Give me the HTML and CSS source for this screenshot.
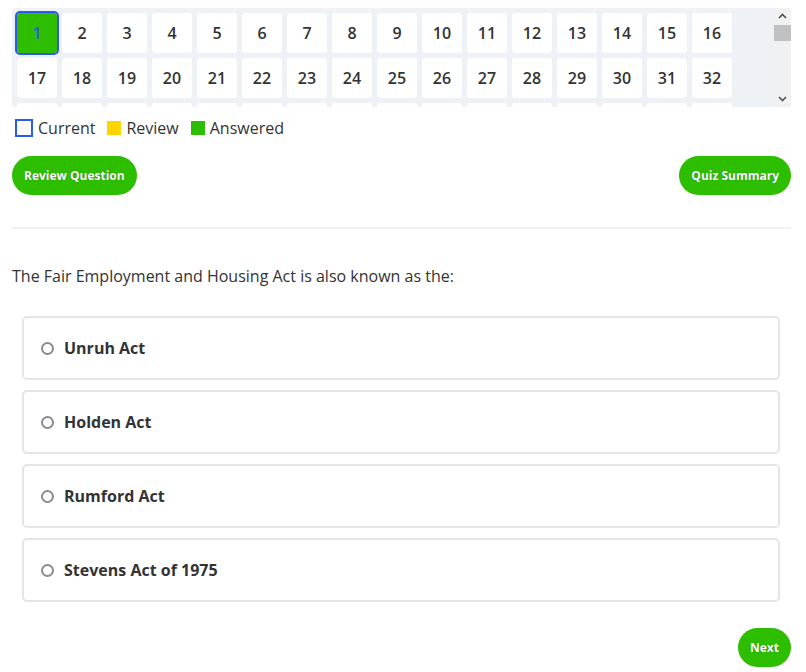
FILE: index.html
```html
<!DOCTYPE html>
<html lang="en">
<head>
<meta charset="utf-8">
<title>Quiz</title>
<link rel="stylesheet" href="styles.css">
</head>
<body>
<div class="page">
  <div class="nav-wrap">
    <div class="nav-grid" id="grid">
      <button class="qnum current answered">1</button>
    </div>
    <div class="scrollbar">
      <svg class="arrow" width="17" height="17" viewBox="0 0 17 17"><path d="M5 10 L8.5 6.5 L12 10" fill="none" stroke="#505050" stroke-width="1.6"/></svg>
      <div class="track"><div class="thumb"></div></div>
      <svg class="arrow" width="17" height="17" viewBox="0 0 17 17"><path d="M5 7 L8.5 10.5 L12 7" fill="none" stroke="#505050" stroke-width="1.6"/></svg>
    </div>
  </div>
  <div class="legend">
    <span class="legend-item"><span class="sw sw-current"></span>Current</span>
    <span class="legend-item"><span class="sw sw-review"></span>Review</span>
    <span class="legend-item"><span class="sw sw-answered"></span>Answered</span>
  </div>
  <div class="actions">
    <button class="pill">Review Question</button>
    <button class="pill">Quiz Summary</button>
  </div>
  <hr class="divider">
  <p class="question">The Fair Employment and Housing Act is also known as the:</p>
  <div class="options">
    <label class="option"><span class="radio"></span><span class="opt-text">Unruh Act</span></label>
    <label class="option"><span class="radio"></span><span class="opt-text">Holden Act</span></label>
    <label class="option"><span class="radio"></span><span class="opt-text">Rumford Act</span></label>
    <label class="option"><span class="radio"></span><span class="opt-text">Stevens Act of 1975</span></label>
  </div>
  <div class="footer">
    <button class="pill pill-next">Next</button>
  </div>
</div>
<script>
  var g = document.getElementById('grid');
  for (var i = 2; i <= 48; i++) {
    var b = document.createElement('button');
    b.className = 'qnum';
    b.textContent = i;
    g.appendChild(b);
  }
</script>
</body>
</html>
```

FILE: styles.css
```css
* { box-sizing: border-box; }
html, body { margin: 0; padding: 0; background: #fff; }
body {
  font-family: "Open Sans", "Noto Sans", sans-serif;
  color: #333;
}
.page {
  padding: 8px 15px 0 12px;
}
.nav-wrap {
  display: flex;
  height: 99px;
  border-radius: 3px;
  overflow: hidden;
  background: #eef1f5;
}
.nav-grid {
  flex: 1;
  overflow: hidden;
  padding: 5px 0 0 5px;
  display: flex;
  flex-wrap: wrap;
  align-content: flex-start;
  gap: 5px;
}
.scrollbar {
  width: 17px;
  flex: none;
  background: #f1f1f1;
  display: flex;
  flex-direction: column;
}
.arrow { display: block; flex: none; }
.track { flex: 1; }
.thumb {
  height: 16px;
  background: #c1c1c1;
}
.qnum {
  width: 40px;
  height: 40px;
  border: 0;
  border-radius: 3px;
  background: #fff;
  font-family: inherit;
  font-size: 16px;
  font-weight: 600;
  color: #333;
  padding: 0;
  display: flex;
  align-items: center;
  justify-content: center;
}
.qnum.answered { background: #2dbe00; }
.qnum.current {
  outline: 2px solid #2a5bea;
  outline-offset: 0;
  color: #2a5bea;
}
.legend {
  display: flex;
  align-items: center;
  gap: 12px;
  margin-top: 10px;
  font-size: 16px;
  line-height: 22px;
  padding-left: 3px;
}
.legend-item {
  display: flex;
  align-items: center;
  gap: 5px;
}
.sw { display: inline-block; }
.sw-current { width: 18px; height: 18px; border: 2px solid #2a5bea; }
.sw-review { width: 14px; height: 14px; background: #ffd500; }
.sw-answered { width: 14px; height: 14px; background: #2dbe00; }
.actions {
  display: flex;
  justify-content: space-between;
  margin-top: 17px;
}
.pill {
  height: 39px;
  border: 0;
  border-radius: 20px;
  background: #2dbe00;
  color: #fff;
  font-family: inherit;
  font-size: 12px;
  font-weight: 700;
  padding: 0 12px;
  text-shadow: 0 0 1px rgba(0,0,0,0.45);
}
.divider {
  border: 0;
  height: 2px;
  background: #eef1f5;
  margin: 32px 0 0;
}
.question {
  font-size: 16px;
  line-height: 24px;
  margin: 35px 0 0;
}
.options {
  display: flex;
  flex-direction: column;
  gap: 10px;
  margin: 28px 11px 0 10px;
}
.option {
  height: 64px;
  border: 2px solid #e2e6ec;
  border-radius: 5px;
  display: flex;
  align-items: center;
  padding-left: 17px;
}
.radio {
  width: 13px;
  height: 13px;
  border: 2px solid #8a8a93;
  border-radius: 50%;
  margin-right: 10px;
}
.opt-text {
  font-size: 16px;
  font-weight: 700;
  color: #333;
}
.footer {
  display: flex;
  justify-content: flex-end;
  margin-top: 26px;
}
```
